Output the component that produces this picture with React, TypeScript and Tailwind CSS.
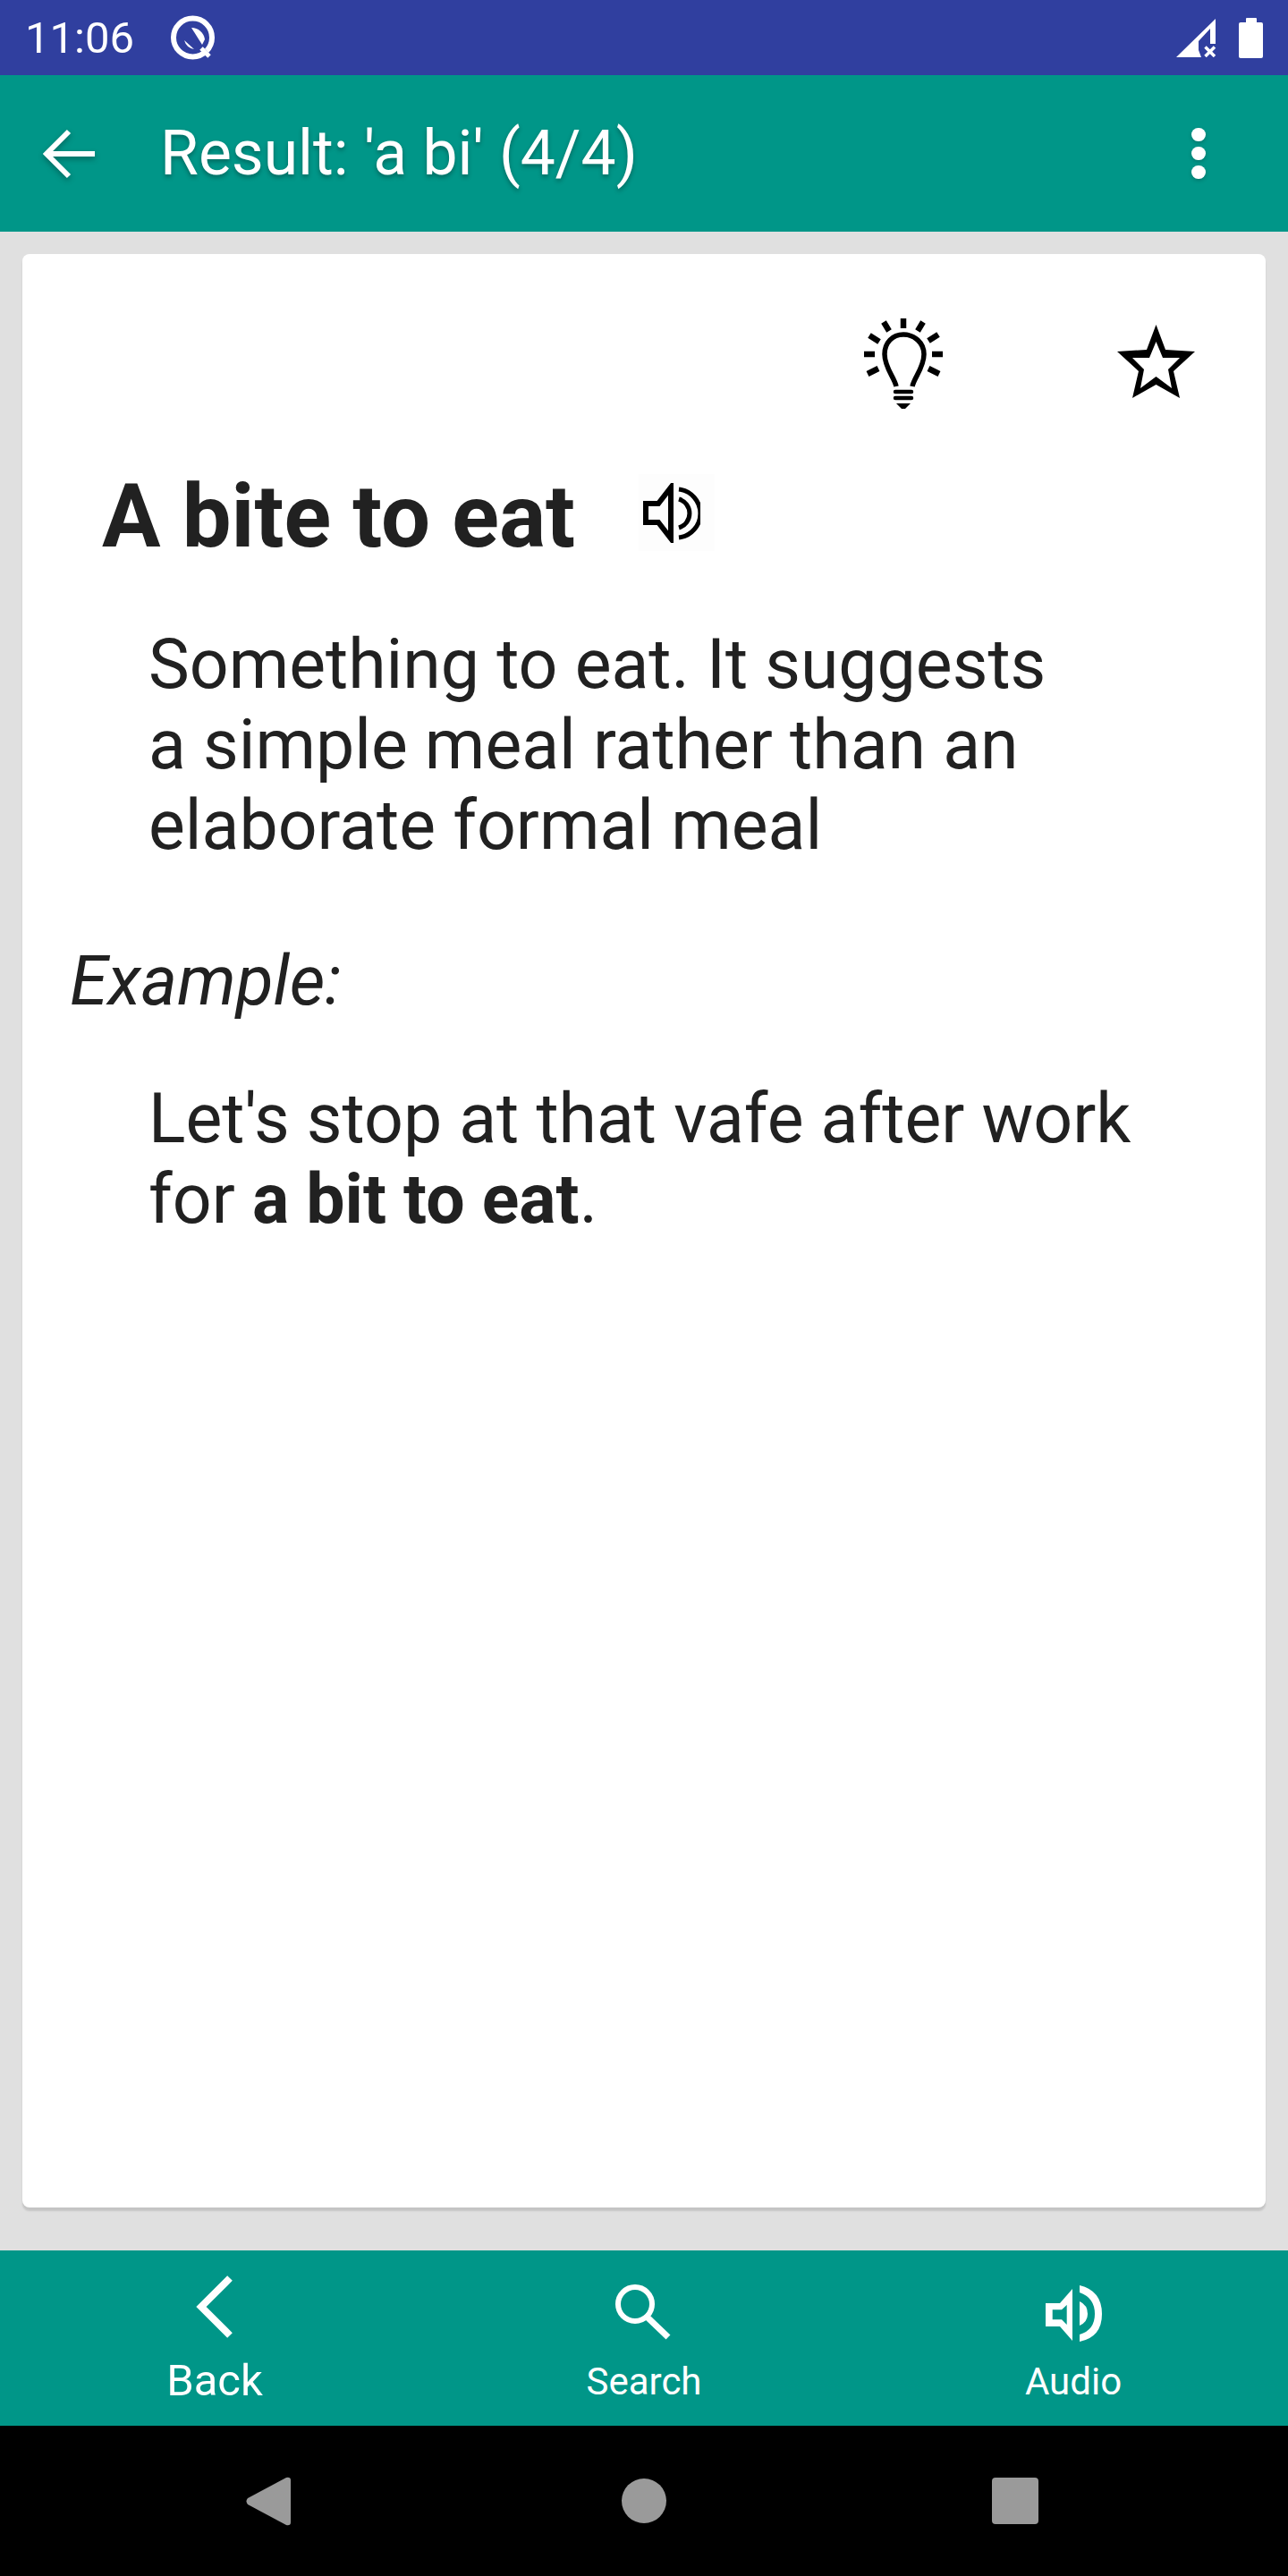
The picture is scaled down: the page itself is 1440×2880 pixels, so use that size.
function Speaker() {
  return (
    <svg viewBox="0 0 64 67" className="w-[64px] h-[67px] text-black" fill="none" stroke="currentColor">
      <path d="M3 23 H17 L31 5 V62 L17 44 H3 Z" strokeWidth="6" />
      <path d="M40 18 A16.700 16.700 0 0 1 40 50" strokeWidth="5" />
      <path d="M40 7 A27.200 27.200 0 0 1 40 61" strokeWidth="5" />
    </svg>
  )
}

function AudioSolid() {
  return (
    <svg viewBox="0 0 63 63" className="w-[63px] h-[63px] text-white" fill="currentColor">
      <path d="M0 20 H16 L30 4 V62 L16 46 H0 Z M7.700 27.300 V38.300 H18 L23.700 44 V22 L18 27.300 Z" fillRule="evenodd" />
      <path d="M38 18 Q47 22 47 32 Q47 41 38 45 Z" />
      <path d="M38 0 Q63 6 63 32 Q63 58 38 63 V55 Q55 50 55 32 Q55 14 38 8 Z" />
    </svg>
  )
}

function Bulb() {
  return (
    <svg viewBox="0 0 88 101" className="w-[88px] h-[101px] text-black" fill="none" stroke="currentColor">
      <path d="M36 76 C34 66 23 55 23 40 C23 27 32 18 44 18 C56 18 67 27 67 40 C67 55 56 66 54 76" strokeWidth="5.500" />
      <path d="M35 82 H53 M35 89 H53" strokeWidth="4.500" strokeLinecap="round" />
      <path d="M36 95 H52 L46 101 H42 Z" fill="currentColor" stroke="none" />
      <path d="M44 0 V11 M22 4 L28 14 M66 4 L60 14 M6 19 L17 26 M83 18 L72 25 M0 40 H12 M76 40 H88 M4 62 L16 56 M84 62 L72 56" strokeWidth="6.500" />
    </svg>
  )
}

function Star() {
  return (
    <svg viewBox="0 0 87 83" className="w-[87px] h-[83px] text-black" fill="currentColor">
      <path
        fillRule="evenodd"
        d="M43.500 0 L54 28 L87 30 L63 52 L70 82 L43.500 67 L17 82 L24 52 L0 30 L33 28 Z M43.500 19 L36 37 L17 37 L30 50 L26 71 L43.500 58 L61 71 L57 50 L70 37 L51 37 Z"
      />
    </svg>
  )
}

export default function App() {
  return (
    <div className="w-[1440px] h-[2880px] flex flex-col bg-[#e0e0e0] font-['Roboto',sans-serif]">
      {/* status bar */}
      <div className="h-[84px] bg-[#303f9f] flex items-center text-white">
        <span className="ml-[28px] text-[49px] leading-none">11:06</span>
        <svg viewBox="0 0 50 50" className="ml-[40px] w-[50px] h-[50px]" fill="none">
          <circle cx="25.500" cy="25" r="21.500" stroke="white" strokeWidth="6" />
          <path d="M24 14 A15 15 0 0 1 39 27 L36 33 Z" fill="white" />
          <path d="M16 28 L27 38 A14 14 0 0 1 16 28 Z" fill="white" />
          <path d="M31 31 L43 44" stroke="#303f9f" strokeWidth="3" />
          <path d="M35 37 L44 46" stroke="white" strokeWidth="5" />
        </svg>
        <svg viewBox="0 0 45 43" className="ml-auto w-[45px] h-[43px]" fill="white">
          <path d="M0 43 L44 0 V28 H38 V11 L25 25 V35 L28 43 Z" />
          <path d="M32.500 31.500 L43 42 M43 31.500 L32.500 42" stroke="white" strokeWidth="3.500" />
        </svg>
        <div className="ml-[25px] mr-[28px] flex flex-col items-center">
          <div className="w-[12px] h-[5px] bg-white rounded-t-[1px]" />
          <div className="w-[27px] h-[40px] bg-white rounded-[2px]" />
        </div>
      </div>

      {/* toolbar */}
      <div className="h-[175px] bg-[#009688] flex items-center text-white">
        <svg viewBox="0 0 58 56" className="ml-[48px] w-[58px] h-[56px] drop-shadow-[0_3px_3px_rgba(0,0,0,0.3)]" fill="none" stroke="white" strokeWidth="6">
          <path d="M58 28 H5 M29 3 L4 28 L29 53" />
        </svg>
        <h1 className="ml-[73px] text-[69.600px] leading-none [text-shadow:0_3px_5px_rgba(0,0,0,0.3)]">Result: 'a bi' (4/4)</h1>
        <div className="ml-auto mr-[92px] flex flex-col gap-[6px] drop-shadow-[0_2px_2px_rgba(0,0,0,0.2)]">
          <div className="w-[16px] h-[15px] rounded-full bg-white" />
          <div className="w-[16px] h-[15px] rounded-full bg-white" />
          <div className="w-[16px] h-[15px] rounded-full bg-white" />
        </div>
      </div>

      {/* card */}
      <div className="flex-1 px-[25px] pt-[25px] pb-[48px] flex flex-col">
        <div className="flex-1 bg-white rounded-[8px] shadow-[0_4px_2px_rgba(0,0,0,0.12)] text-[#212121]">
          <div className="flex pt-[72px] pl-[941px]">
            <Bulb />
            <div className="ml-[195px] mt-[7px]">
              <Star />
            </div>
          </div>
          <div className="mt-[73px] ml-[89px] flex items-start">
            <h2 className="mt-[5px] text-[97.500px] leading-[86px] font-bold">A bite to eat</h2>
            <div className="ml-[71px] w-[85px] h-[86px] bg-[#fdfdfd] flex items-center pl-[5px]">
              <Speaker />
            </div>
          </div>
          <p className="mt-[77px] ml-[141px] w-[1080px] text-[77px] leading-[90px]">
            Something to eat. It suggests
            <br />a simple meal rather than an
            <br />elaborate formal meal
          </p>
          <p className="mt-[84px] ml-[53px] text-[77px] leading-[90px] italic">Example:</p>
          <p className="mt-[64px] ml-[141px] text-[77px] leading-[90px]">
            Let's stop at that vafe after work
            <br />
            for <b>a bit to eat</b>.
          </p>
        </div>
      </div>

      {/* bottom bar */}
      <div className="h-[196px] bg-[#009688] grid grid-cols-3 text-white">
        <div className="flex flex-col items-center">
          <svg viewBox="0 0 42 70" className="mt-[28px] w-[42px] h-[70px]" fill="none" stroke="white" strokeWidth="8">
            <path d="M38 3 L6 35 L38 67" />
          </svg>
          <span className="mt-[19px] text-[49px] leading-[58px]">Back</span>
        </div>
        <div className="flex flex-col items-center">
          <svg viewBox="0 0 64 66" className="mt-[36px] w-[64px] h-[66px]" fill="none" stroke="white">
            <circle cx="22" cy="24" r="19" strokeWidth="6" />
            <path d="M36 39 L59 61" strokeWidth="7" />
          </svg>
          <span className="mt-[20px] text-[42px] leading-[50px]">Search</span>
        </div>
        <div className="flex flex-col items-center">
          <div className="mt-[39px] h-[63px]">
            <AudioSolid />
          </div>
          <span className="mt-[20px] text-[42px] leading-[50px]">Audio</span>
        </div>
      </div>

      {/* android nav */}
      <div className="h-[168px] bg-black flex items-center">
        <svg viewBox="0 0 50 55" className="ml-[275px] w-[50px] h-[55px]" fill="#9a9a9a">
          <path d="M2 24 L45 1 Q50 0 50 4 V51 Q50 55 45 54 L2 31 Q-1 27.500 2 24 Z" />
        </svg>
        <div className="ml-[370px] w-[50px] h-[50px] rounded-full bg-[#9a9a9a]" />
        <div className="ml-[364px] w-[52px] h-[52px] rounded-[4px] bg-[#9a9a9a]" />
      </div>
    </div>
  )
}
